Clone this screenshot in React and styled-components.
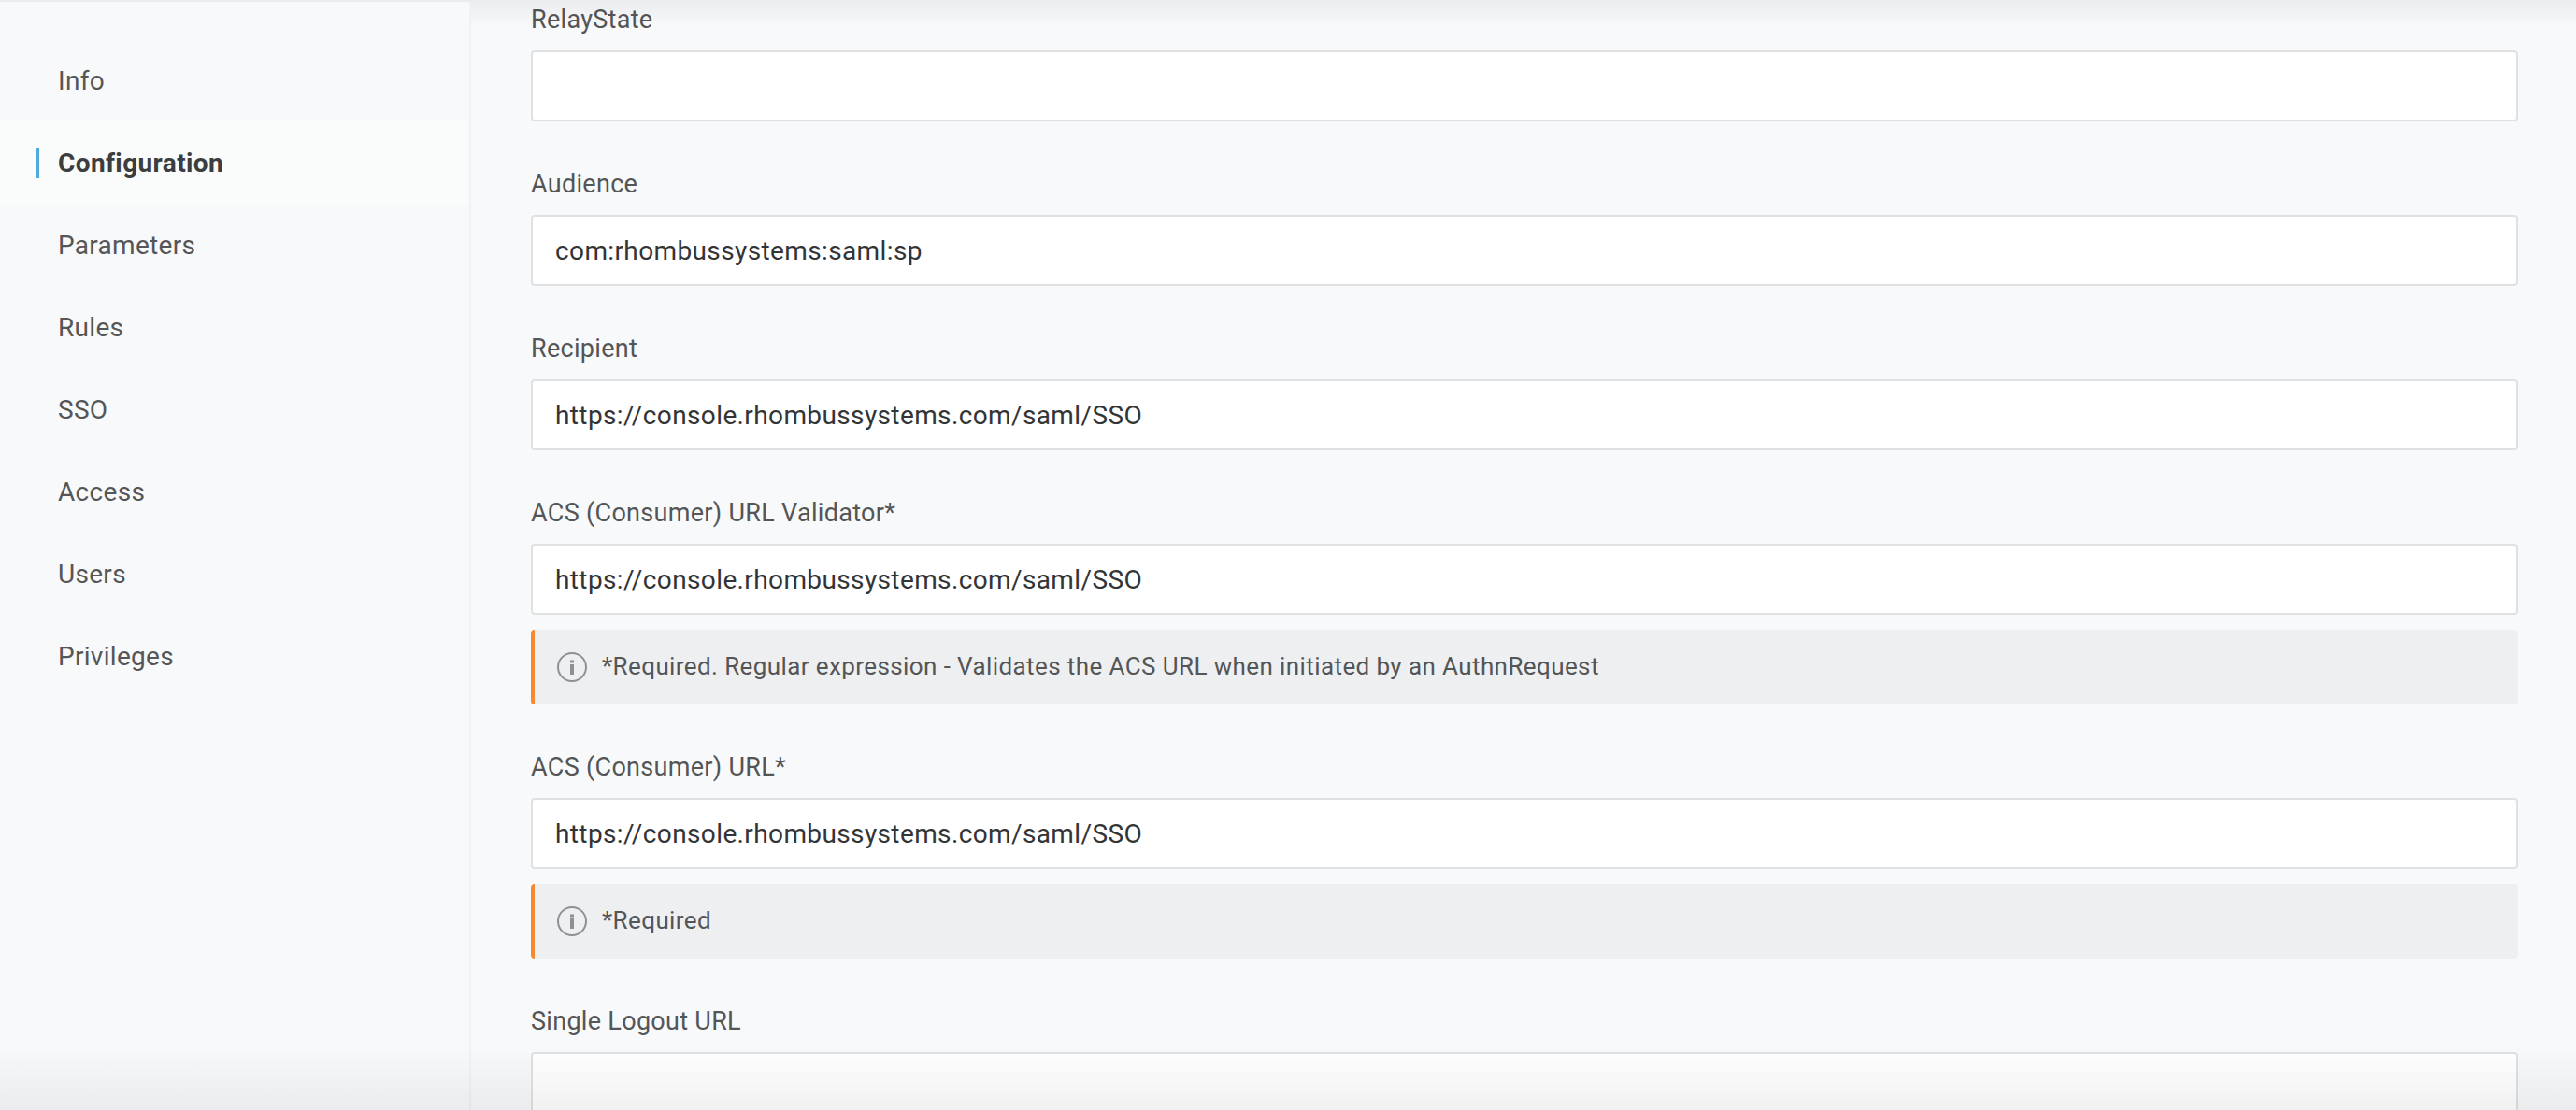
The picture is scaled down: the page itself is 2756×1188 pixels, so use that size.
import React from 'react';
import styled, { createGlobalStyle } from 'styled-components';

const Global = createGlobalStyle`
  html, body { margin: 0; padding: 0; height: 100%; overflow: hidden; background: #f8f9fb; }
  * { box-sizing: border-box; }
  body { font-family: Roboto, "Liberation Sans", sans-serif; }
`;

const Page = styled.div`
  position: relative;
  display: flex;
  width: 100%;
  height: 100vh;
  overflow: hidden;
  background: #f8f9fb;
`;

const Sidebar = styled.nav`
  flex: 0 0 504px;
  display: flex;
  flex-direction: column;
  padding-top: 42px;
  border-right: 2px solid #f0f1f3;
`;

const NavItem = styled.a`
  position: relative;
  display: flex;
  align-items: center;
  height: 88px;
  padding-left: 62px;
  font-size: 28px;
  letter-spacing: ${p => (p.$active ? '0.38px' : '0.3px')};
  font-weight: ${p => (p.$active ? 700 : 400)};
  color: ${p => (p.$active ? '#3c3d3e' : '#555657')};
  background: ${p => (p.$active ? '#fafbfb' : 'transparent')};
  &::before {
    content: '';
    display: ${p => (p.$active ? 'block' : 'none')};
    position: absolute;
    left: 38px;
    top: 28px;
    width: 4px;
    height: 32px;
    background: #4fa9dd;
  }
`;

const Main = styled.main`
  flex: 1;
  padding: 4px 62px 0 64px;
`;

const Field = styled.div`
  margin-bottom: 50px;
`;

const Label = styled.label`
  display: block;
  height: 34px;
  line-height: 34px;
  margin-bottom: 16px;
  font-size: 27px;
  letter-spacing: 0.3px;
  color: #545556;
`;

const Input = styled.input`
  display: block;
  width: 100%;
  height: 76px;
  padding: 0 24px;
  background: #fff;
  border: 2px solid #e0e1e2;
  border-radius: 4px;
  outline: none;
  font-family: inherit;
  font-size: 28px;
  letter-spacing: 0.38px;
  color: #333435;
`;

const Note = styled.div`
  display: flex;
  align-items: center;
  gap: 16px;
  height: 80.5px;
  margin-top: 15.5px;
  padding-left: 24px;
  background: #eeeff1;
  border-left: 4px solid #f58a33;
  border-radius: 4px;
  font-size: 26px;
  letter-spacing: 0.4px;
  color: #545556;
`;

const NoteText = styled.span`
  padding-bottom: 2px;
`;

const Shade = styled.div`
  position: absolute;
  left: ${p => p.$left || 0}px;
  right: 0;
  pointer-events: none;
  ${p => p.$top ? 'top: 0; height: 28px; background: linear-gradient(rgba(0,0,0,0.055), rgba(0,0,0,0));' : ''}
  ${p => p.$bottom ? 'bottom: 0; height: 70px; background: linear-gradient(rgba(0,0,0,0), rgba(0,0,0,0.055));' : ''}
`;

const TopLine = styled.div`
  position: absolute;
  top: 0;
  left: 0;
  right: 0;
  height: 2px;
  background: #ebecee;
  pointer-events: none;
`;

const InfoIcon = () => (
  <svg width="32" height="32" viewBox="0 0 32 32" fill="none">
    <circle cx="16" cy="16" r="15" stroke="#8f9091" strokeWidth="2" />
    <rect x="14" y="8.5" width="4" height="3" fill="#8f9091" />
    <rect x="14" y="13" width="4" height="11" fill="#8f9091" />
  </svg>
);

const navItems = ['Info', 'Configuration', 'Parameters', 'Rules', 'SSO', 'Access', 'Users', 'Privileges'];
const url = 'https://console.rhombussystems.com/saml/SSO';
const fields = [
  { label: 'RelayState', value: '' },
  { label: 'Audience', value: 'com:rhombussystems:saml:sp' },
  { label: 'Recipient', value: url },
  { label: 'ACS (Consumer) URL Validator*', value: url, note: '*Required. Regular expression - Validates the ACS URL when initiated by an AuthnRequest' },
  { label: 'ACS (Consumer) URL*', value: url, note: '*Required' },
  { label: 'Single Logout URL', value: '' },
];

export default function App() {
  return (
    <Page>
      <Global />
      <Sidebar>
        {navItems.map(n => (
          <NavItem key={n} $active={n === 'Configuration'}>{n}</NavItem>
        ))}
      </Sidebar>
      <Main>
        {fields.map(f => (
          <Field key={f.label}>
            <Label>{f.label}</Label>
            <Input readOnly defaultValue={f.value} />
            {f.note && (
              <Note>
                <InfoIcon />
                <NoteText>{f.note}</NoteText>
              </Note>
            )}
          </Field>
        ))}
      </Main>
      <Shade $top $left={504} />
      <Shade $bottom />
      <TopLine />
    </Page>
  );
}
